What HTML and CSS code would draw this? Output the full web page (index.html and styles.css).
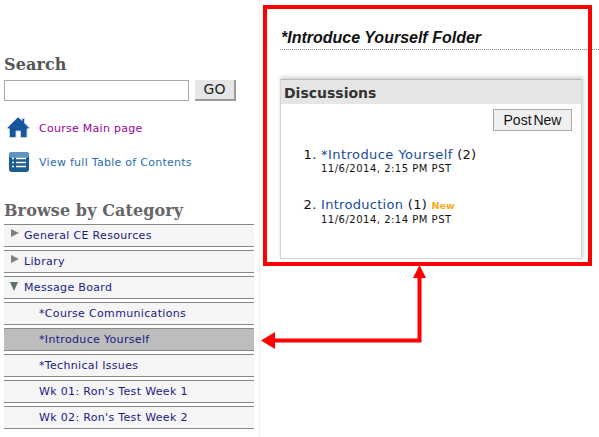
FILE: index.html

```html
<!DOCTYPE html>
<html lang="en">

<head>
    <meta charset="UTF-8">
    <meta name="viewport" content="width=device-width, initial-scale=1.0">
    <title>Introduce Yourself Folder</title>
    <link rel="stylesheet" href="styles.css">
</head>

<body>
    <div class="page">
        <div class="sidebar">
            <h2 class="side-title">Search</h2>
            <div class="search-row">
                <input class="search-input" type="text">
                <span class="go-btn">GO</span>
            </div>
            <div class="side-link">
                <svg class="side-icon" width="24" height="24" viewBox="0 0 24 24">
                    <path d="M12 1 L16 4.5 V2.5 H18.5 V7 L23.5 12 L21 13 V21.5 H14.5 V15 H10 V21.5 H3.5 V13 L1 12 Z" fill="#15569f" stroke="#c4d2e2" stroke-width="1"/>
                </svg>
                <a class="visited" href="#">Course Main page</a>
            </div>
            <div class="side-link toc-link">
                <svg class="side-icon" width="24" height="24" viewBox="0 0 24 24">
                    <rect x="3" y="2" width="20" height="20" rx="3" fill="#1d5c8f"/>
                    <rect x="3" y="2" width="20" height="6" rx="3" fill="#5c94bd"/>
                    <path d="M6 8.5h2M10 8.5h10M6 12.5h2M10 12.5h10M6 16.5h2M10 16.5h10" stroke="#fff" stroke-width="1.7"/>
                </svg>
                <a href="#">View full Table of Contents</a>
            </div>
            <h2 class="side-title browse">Browse by Category</h2>
            <div class="cat-row"><span class="arrow-right"></span>General CE Resources</div>
            <div class="cat-row"><span class="arrow-right"></span>Library</div>
            <div class="cat-row"><span class="arrow-down"></span>Message Board</div>
            <div class="cat-row sub">*Course Communications</div>
            <div class="cat-row sub active">*Introduce Yourself</div>
            <div class="cat-row sub">*Technical Issues</div>
            <div class="cat-row sub">Wk 01: Ron's Test Week 1</div>
            <div class="cat-row sub">Wk 02: Ron's Test Week 2</div>
        </div>

        <div class="main">
            <h1 class="folder-title">*Introduce Yourself Folder</h1>
            <div class="panel">
                <div class="panel-header">Discussions</div>
                <div class="panel-tools">
                    <span class="post-btn">Post New</span>
                </div>
                <ol class="topic-list">
                    <li>
                        <a href="#">*Introduce Yourself</a> (2)
                        <div class="topic-date">11/6/2014, 2:15 PM PST</div>
                    </li>
                    <li>
                        <a href="#">Introduction</a> (1) <span class="new-tag">New</span>
                        <div class="topic-date">11/6/2014, 2:14 PM PST</div>
                    </li>
                </ol>
            </div>
        </div>
    </div>

    <!-- red callout drawn over the page -->
    <svg class="callout" width="599" height="437" viewBox="0 0 599 437">
        <rect x="265" y="7" width="325" height="257" fill="none" stroke="#f00" stroke-width="4"/>
        <path d="M419.5 275 V340.5 H272" fill="none" stroke="#f00" stroke-width="4"/>
        <path d="M419.5 265 L426 278 H413 Z" fill="#f00"/>
        <path d="M261 340.5 L275 332 V349 Z" fill="#f00"/>
    </svg>
</body>

</html>
```

FILE: styles.css

```css
body {
    margin: 0;
    background-color: white;
    font-family: "DejaVu Sans", sans-serif;
}

.page {
    display: flex;
    width: 599px;
    height: 437px;
    overflow: hidden;
}

.callout {
    position: absolute;
    top: 0;
    left: 0;
}

/* left column */
.sidebar {
    width: 260px;
    padding: 55px 5px 0 4px;
    box-sizing: border-box;
    border-right: 1px solid #f0f0f0;
    flex-shrink: 0;
}

.side-title {
    margin: 0;
    font-family: "DejaVu Serif", serif;
    font-size: 16px;
    letter-spacing: 0.1px;
    line-height: 19px;
    font-weight: bold;
    color: #555;
}

.browse {
    margin-top: 27px;
    margin-bottom: 4px;
    color: #666;
}

.search-row {
    display: flex;
    align-items: center;
    margin-top: 6px;
}

.search-input {
    width: 185px;
    height: 21px;
    box-sizing: border-box;
    padding: 0;
    border: 1px solid #aaa;
    background-color: white;
}

.go-btn {
    width: 41px;
    height: 21px;
    margin-left: 6px;
    box-sizing: border-box;
    border-right: 2px solid #999;
    border-bottom: 2px solid #999;
    background-color: #e6e6e6;
    color: #222;
    font-size: 14px;
    line-height: 19px;
    text-align: center;
}

.side-link {
    display: flex;
    align-items: center;
    margin-top: 15px;
    padding-left: 2px;
    font-size: 11px;
    letter-spacing: 0.27px;
    height: 24px;
}

.toc-link {
    margin-top: 10px;
}

.side-icon {
    margin-right: 9px;
}

.side-link a {
    color: #2a6db0;
    text-decoration: none;
}

.side-link a.visited {
    color: #990099;
}

.cat-row {
    position: relative;
    height: 23px;
    box-sizing: border-box;
    margin-bottom: 3px;
    padding-left: 20px;
    border-top: 1px solid #888;
    border-bottom: 1px solid #888;
    background-color: #f5f5f5;
    color: #1a1a80;
    font-size: 11px;
    letter-spacing: 0.33px;
    line-height: 21px;
}

.cat-row.sub {
    padding-left: 35px;
}

.cat-row.active {
    background-color: #bdbdbd;
}

.arrow-right {
    position: absolute;
    left: 7px;
    top: 4px;
    border-left: 8px solid #808080;
    border-top: 4px solid transparent;
    border-bottom: 4px solid transparent;
}

.arrow-down {
    position: absolute;
    left: 6px;
    top: 5px;
    border-top: 9px solid #5f6f6f;
    border-left: 4px solid transparent;
    border-right: 4px solid transparent;
}

/* right column */
.main {
    flex: 1;
    padding: 29px 0 0 20px;
}

.folder-title {
    margin: 0;
    padding: 0 0 2px 1px;
    border-bottom: 1px dotted #888;
    font-family: "Liberation Sans", sans-serif;
    font-size: 16px;
    line-height: 18px;
    font-style: italic;
    font-weight: bold;
    color: #111;
}

.panel {
    width: 302px;
    height: 180px;
    margin-top: 29px;
    box-sizing: border-box;
    border: 1px solid #d4d4d4;
    border-top: 1px solid #bbb;
    box-shadow: 1px -2px 4px rgba(0, 0, 0, 0.2);
}

.panel-header {
    height: 24px;
    padding-left: 3px;
    background-color: #e6e6e6;
    color: #333;
    font-size: 14px;
    line-height: 26px;
    font-weight: bold;
}

.panel-tools {
    display: flex;
    justify-content: flex-end;
    padding: 5px 9px 0 0;
}

.post-btn {
    width: 79px;
    height: 22px;
    box-sizing: border-box;
    border: 1px solid #aaa;
    background-color: #f0f0f0;
    color: #111;
    font-family: "Liberation Sans", sans-serif;
    font-size: 14px;
    word-spacing: -2px;
    line-height: 20px;
    text-align: center;
}

.topic-list {
    margin: 16px 0 0 0;
    padding: 0 0 0 40px;
    color: #111;
    font-size: 13px;
    letter-spacing: 0.3px;
    line-height: 16px;
}

.topic-list li {
    height: 50px;
}

.topic-list li:first-child a {
    letter-spacing: 0.45px;
}

.topic-list a {
    color: #1a4c96;
    text-decoration: none;
}

.topic-date {
    font-size: 10px;
    letter-spacing: 0.5px;
    line-height: 12px;
    color: #111;
}

.new-tag {
    color: #f9a825;
    font-size: 9.5px;
    letter-spacing: 0;
    font-weight: bold;
}
```
